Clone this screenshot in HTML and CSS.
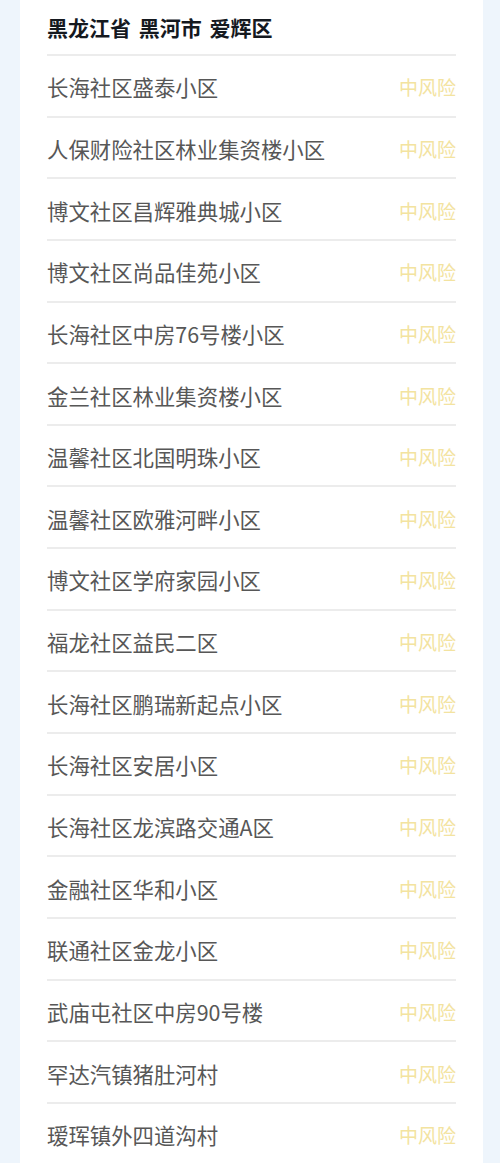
FILE: index.html
```html
<!DOCTYPE html>
<html lang="zh-CN">
<head>
    <meta charset="UTF-8">
    <meta name="viewport" content="width=device-width, initial-scale=1.0">
    <title>中风险地区</title>
    <link rel="stylesheet" href="styles.css">
</head>
<body>
    <div class="card">
        <h2 class="area-title">黑龙江省 黑河市 爱辉区</h2>
        <ul class="risk-list">
            <li class="risk-row"><span class="place">长海社区盛泰小区</span><span class="level">中风险</span></li>
            <li class="risk-row"><span class="place">人保财险社区林业集资楼小区</span><span class="level">中风险</span></li>
            <li class="risk-row"><span class="place">博文社区昌辉雅典城小区</span><span class="level">中风险</span></li>
            <li class="risk-row"><span class="place">博文社区尚品佳苑小区</span><span class="level">中风险</span></li>
            <li class="risk-row"><span class="place">长海社区中房76号楼小区</span><span class="level">中风险</span></li>
            <li class="risk-row"><span class="place">金兰社区林业集资楼小区</span><span class="level">中风险</span></li>
            <li class="risk-row"><span class="place">温馨社区北国明珠小区</span><span class="level">中风险</span></li>
            <li class="risk-row"><span class="place">温馨社区欧雅河畔小区</span><span class="level">中风险</span></li>
            <li class="risk-row"><span class="place">博文社区学府家园小区</span><span class="level">中风险</span></li>
            <li class="risk-row"><span class="place">福龙社区益民二区</span><span class="level">中风险</span></li>
            <li class="risk-row"><span class="place">长海社区鹏瑞新起点小区</span><span class="level">中风险</span></li>
            <li class="risk-row"><span class="place">长海社区安居小区</span><span class="level">中风险</span></li>
            <li class="risk-row"><span class="place">长海社区龙滨路交通A区</span><span class="level">中风险</span></li>
            <li class="risk-row"><span class="place">金融社区华和小区</span><span class="level">中风险</span></li>
            <li class="risk-row"><span class="place">联通社区金龙小区</span><span class="level">中风险</span></li>
            <li class="risk-row"><span class="place">武庙屯社区中房90号楼</span><span class="level">中风险</span></li>
            <li class="risk-row"><span class="place">罕达汽镇猪肚河村</span><span class="level">中风险</span></li>
            <li class="risk-row"><span class="place">瑷珲镇外四道沟村</span><span class="level">中风险</span></li>
        </ul>
    </div>
</body>
</html>
```

FILE: styles.css
```css
body {
    margin: 0;
    background-color: #eef5fc;
    font-family: "Noto Sans CJK SC", "Noto Sans", sans-serif;
    overflow: hidden;
}

.card {
    margin: 0 17px 0 20px;
    background-color: #ffffff;
    padding: 0 27px;
    min-height: 1163px;
}

.area-title {
    margin: 0;
    padding-top: 12px;
    height: 42px;
    font-size: 21px;
    line-height: 30px;
    font-weight: 700;
    word-spacing: 3px;
    color: #15191f;
}

.risk-list {
    list-style: none;
    margin: 0;
    padding: 0;
}

.risk-row {
    display: flex;
    justify-content: space-between;
    align-items: center;
    height: 59.65px;
    border-top: 2px solid #ececec;
}

.place {
    font-size: 21.4px;
    color: #575757;
    padding-top: 2px;
}

.level {
    font-size: 19px;
    color: #f3e3a0;
    padding-top: 2px;
}
```
